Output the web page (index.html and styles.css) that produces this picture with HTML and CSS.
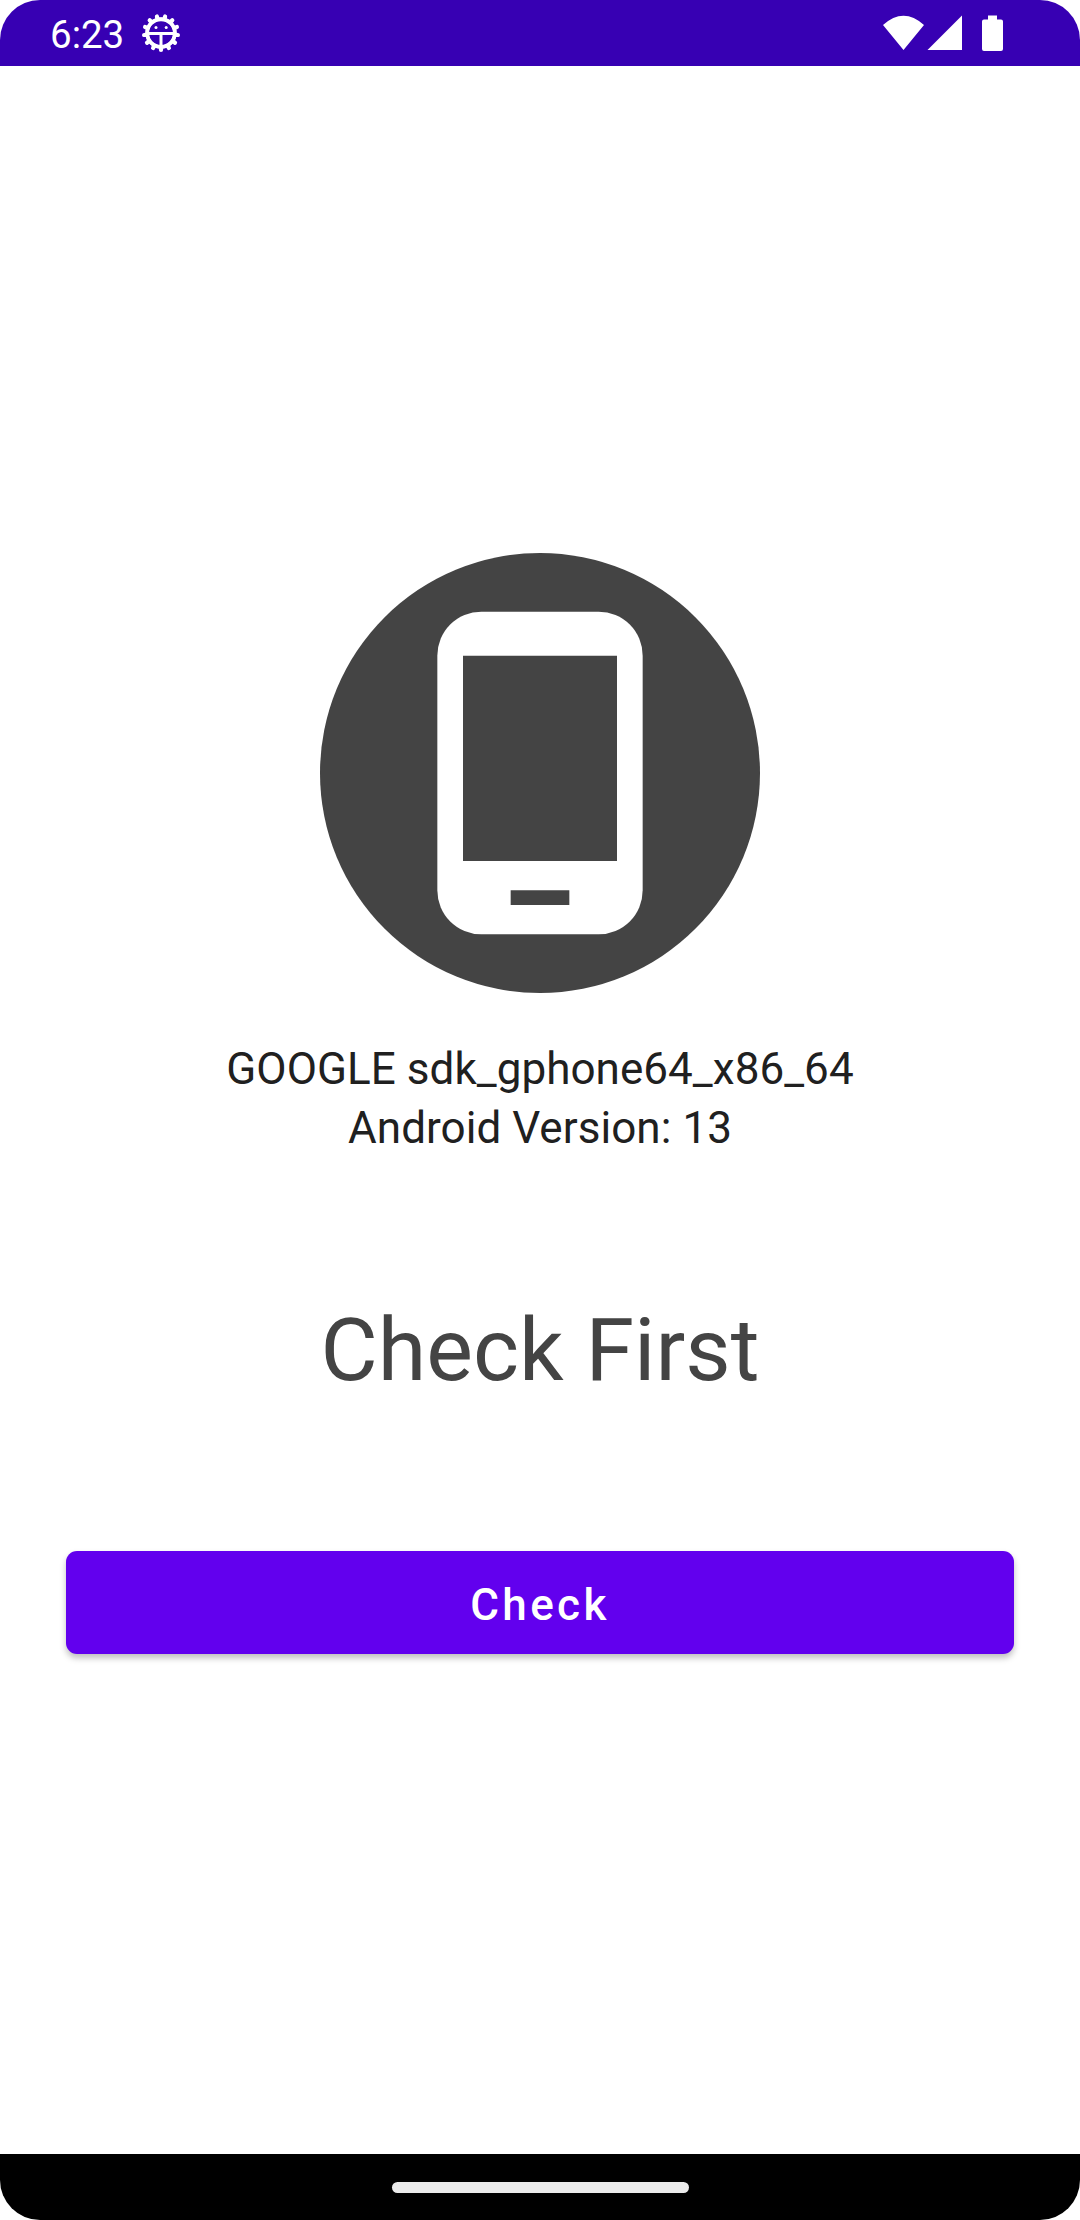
FILE: index.html
```html
<!DOCTYPE html>
<html lang="en">
<head>
<meta charset="utf-8">
<title>Device check</title>
<link rel="stylesheet" href="styles.css">
</head>
<body>
<div class="screen">
  <header class="status-bar">
    <span class="clock">6:23</span>
    <svg class="debug-icon" viewBox="-20 -20 40 40" width="40" height="40">
      <g fill="none" stroke="#fff">
        <circle r="13.8" stroke-width="3.9"/>
        <circle r="14" stroke-width="3"/>
        <path stroke-width="4.200" stroke-linecap="round" d="M0 15V17M7 13.300L7.900 15M12.400 8.500L14 9.700M14.900 1.800L16.900 2M14 -5.300L15.900 -6M9.900 -11.200L11.300 -12.700M3.600 -14.600L4.100 -16.500M-3.600 -14.600L-4.100 -16.500M-9.900 -11.200L-11.300 -12.700M-14 -5.300L-15.900 -6M-14.900 1.800L-16.900 2M-12.400 8.500L-14 9.700M-7 13.300L-7.900 15"/>
        <path stroke-width="3" d="M-13 .5H13M0 .5V14"/>
      </g>
      <circle cx="-5" cy="-5.500" r="1.5" fill="#fff"/><circle cx="5.200" cy="-5.500" r="1.5" fill="#fff"/>
    </svg>
    <svg class="system-icons" viewBox="0 0 122 38" width="122" height="38">
      <path fill="#fff" d="M0 10.5Q20.500 -8 41 10.500L20.500 35.500ZM44.500 35.500L79 1V35.500ZM105 1H114V5H118Q120 5 120 7V34.500Q120 36.500 118 36.500H101Q99 36.500 99 34.500V7Q99 5 101 5H105Z" transform="translate(0 .4)"/>
    </svg>
  </header>
  <main class="content">
    <svg class="device-icon" viewBox="0 0 30 30" width="440" height="440">
      <circle cx="15" cy="15" r="15" fill="#444"/>
      <rect x="8" y="4" width="14" height="22" rx="3" fill="#fff"/>
      <path d="M9.750 7h10.500v14H9.750zM13 23h4v1h-4z" fill="#444"/>
    </svg>
    <p class="device-info">GOOGLE sdk_gphone64_x86_64<br>Android Version: 13</p>
    <h1 class="result">Check First</h1>
    <button class="check-button" type="button">Check</button>
  </main>
  <footer class="nav-bar"><div class="gesture-handle"></div></footer>
</div>
</body>
</html>
```
FILE: styles.css
```css
html, body {
  margin: 0;
  background: #fff;
}
.screen {
  display: flex;
  flex-direction: column;
  width: 1080px;
  height: 2220px;
  overflow: hidden;
  border-radius: 40px;
  font-family: Roboto, "Liberation Sans", sans-serif;
}
.status-bar {
  display: flex;
  align-items: center;
  box-sizing: border-box;
  height: 66px;
  padding: 0 75px 0 50px;
  background: #3700b3;
  color: #fff;
}
.clock {
  padding-top: 3px;
  font-size: 38.5px;
  line-height: 46px;
}
.debug-icon {
  margin-left: 17px;
}
.system-icons {
  margin-left: auto;
}
.content {
  display: flex;
  flex: 1;
  flex-direction: column;
  align-items: center;
  padding: 487px 66px 0;
}
.device-info {
  margin: 47px 0 0;
  color: #202020;
  font-size: 44px;
  line-height: 59px;
  letter-spacing: 0.05px;
  text-align: center;
}
.result {
  margin: 133px 0 0;
  color: #444;
  font-size: 88px;
  font-weight: 400;
  line-height: 118px;
}
.check-button {
  width: 948px;
  height: 103px;
  margin: 142px 0 0;
  padding: 4px 0 0;
  border: 0;
  border-radius: 11px;
  background: #6200ee;
  box-shadow: 0 4px 6px rgba(0, 0, 0, 0.25);
  color: #fff;
  font: 500 44px/52px Roboto, "Liberation Sans", sans-serif;
  letter-spacing: 3.4px;
}
.nav-bar {
  display: flex;
  align-items: center;
  justify-content: center;
  height: 66px;
  background: #000;
}
.gesture-handle {
  width: 297px;
  height: 11px;
  border-radius: 6px;
  background: #ebebeb;
}
```
